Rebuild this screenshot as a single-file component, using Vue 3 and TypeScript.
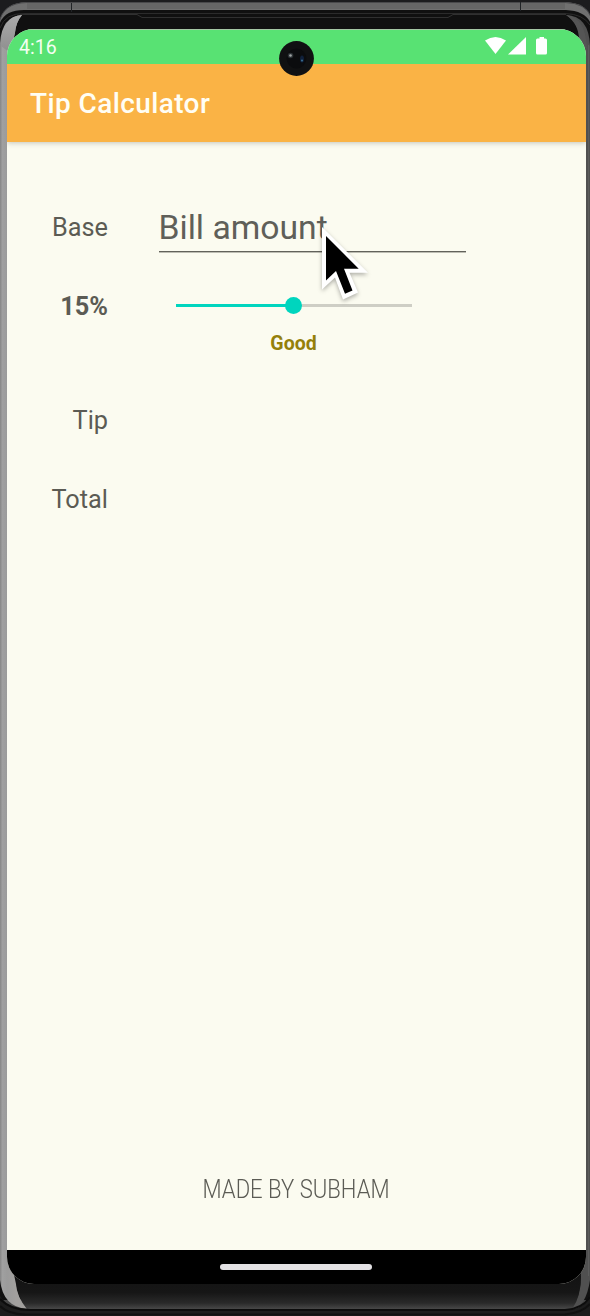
<script setup lang="ts">
import { computed, ref } from 'vue'

const bill = ref('')
const percent = ref(15)
const maxPercent = 30
const fill = computed(() => `${(percent.value / maxPercent) * 100}%`)
</script>

<template>
  <div class="device">
    <svg class="frame" viewBox="0 0 590 1316" aria-hidden="true">
      <defs>
        <linearGradient id="rim" x1="0" y1="0" x2="0" y2="1">
          <stop offset="0" stop-color="#707070" />
          <stop offset="0.55" stop-color="#606060" />
          <stop offset="1" stop-color="#454545" />
        </linearGradient>
        <linearGradient id="side" gradientUnits="userSpaceOnUse" x1="0" y1="0" x2="16" y2="0">
          <stop offset="0" stop-color="#858585" />
          <stop offset="0.15" stop-color="#a0a0a0" />
          <stop offset="0.45" stop-color="#9b9b9b" />
          <stop offset="1" stop-color="#a2a09e" />
        </linearGradient>
        <linearGradient id="chin" x1="0" y1="0" x2="0" y2="1">
          <stop offset="0" stop-color="#131313" />
          <stop offset="0.5" stop-color="#161616" />
          <stop offset="0.82" stop-color="#2a2a2a" />
          <stop offset="1" stop-color="#484848" />
        </linearGradient>
        <linearGradient id="topArc" x1="0" y1="0" x2="0" y2="1">
          <stop offset="0" stop-color="#ababab" />
          <stop offset="1" stop-color="#8e8e8e" />
        </linearGradient>
      </defs>
      <rect width="590" height="1316" fill="#1c1c1e" />
      <!-- outer metal rim -->
      <path d="M-1 24Q2 3 27 2H565Q587 3 591 18V1316H-1Z" fill="url(#rim)" />
      <path d="M-1 25Q4 10 24 10H566Q586 11 591 24V1300H-1Z" fill="#101010" />
      <path d="M-1 24Q2 3 27 2.500H565Q586 3 591 17" fill="none" stroke="#49494b" />
      <path d="M27 6H565" stroke="#666" stroke-width="6" />
      <path d="M71.500 3V12M520.500 2V11" stroke="#202326" />
      <path d="M0 28Q5 13 25 13.500H565Q583 14 590 25" fill="none" stroke="#2b2b2b" />
      <path d="M20 14.500H137L142 17.500H448L453 14.500H566" fill="none" stroke="#303030" />
      <!-- side rails -->
      <path d="M22 15Q2 16 0 43V1280Q3 1307 27 1309Q17 1297 16 1284L12 1265V50L15 32Q16 22 22 15Z" fill="url(#side)" />
      <path d="M22 15Q2 16 1 46L9 52L15 33Q16 22 22 15Z" fill="url(#topArc)" />
      <path d="M566 15Q589 16 590 46V1280Q586 1307 572 1309Q581 1295 581 1273V50Q581 23 566 15Z" fill="#505050" />
      <path d="M566 15Q586 17 587 50L579 40Q579 24 566 15Z" fill="#555" />
      <path d="M588.500 45V1276" stroke="#5c5c5c" />
      <!-- bottom bezel -->
      <path d="M16 1276H581Q581 1297 572 1309H27Q16 1296 16 1276Z" fill="url(#chin)" />
      <path d="M0 1296Q8 1309 27 1309.500H572Q584 1308 590 1296V1316H0Z" fill="#1c1c1c" />
      <path d="M0 1299Q10 1310 30 1310H565Q582 1309 590 1297" fill="none" stroke="#0c0c0c" stroke-width="2" />
      <path d="M0 1306Q8 1314 25 1314.500H565Q582 1313 590 1304" fill="none" stroke="#101010" stroke-width="2" />
    </svg>

    <main class="screen">
      <header class="status">
        <time>4:16</time>
        <svg class="signals" width="64" height="20" viewBox="0 0 64 20" aria-label="Connected">
          <path d="M0 4.500Q10.500 -2.500 21 4.500L10.500 18Z" />
          <path d="M41 1V18.500H23Z" />
          <path d="M54.500 1H59V2.500H60.500Q62 2.500 62 4V17Q62 18.500 60.500 18.500H52.500Q51 18.500 51 17V4Q51 2.500 52.500 2.500H54.500Z" />
        </svg>
      </header>
      <div class="appbar"><h1>Tip Calculator</h1></div>

      <section class="content">
        <div class="row base">
          <label for="bill">Base</label>
          <input id="bill" v-model="bill" placeholder="Bill amount" inputmode="decimal" />
        </div>
        <div class="row rate">
          <strong>{{ percent }}%</strong>
          <div class="slider" role="slider" :aria-valuenow="percent">
            <div class="progress" :style="{ width: fill }"><i class="thumb"></i></div>
          </div>
        </div>
        <div class="rating">Good</div>
        <div class="row tip"><span>Tip</span></div>
        <div class="row total"><span>Total</span></div>
        <footer><span>MADE BY SUBHAM</span></footer>
      </section>

      <nav><div class="handle"></div></nav>
    </main>

    <svg class="camera" viewBox="0 0 36 36" aria-hidden="true">
      <circle cx="18.500" cy="18.500" r="17.400" fill="#101112" />
      <circle cx="18.500" cy="18.500" r="10" fill="#0b0c0e" />
      <circle cx="12.500" cy="15.500" r="2.800" fill="#2b3033" />
      <circle cx="12.500" cy="15.500" r="1.300" fill="#a2a7a8" />
      <ellipse cx="24" cy="19" rx="2" ry="3.500" fill="#10203a" />
      <circle cx="24" cy="20.500" r="1" fill="#3b7193" />
    </svg>

    <svg class="cursor" viewBox="0 0 56 84" aria-hidden="true">
      <path class="edge" d="M5 2V64.500L18 52.500L26 74.500L41 67.500L32.500 47.700H51Z" />
      <path class="arrow" d="M9 11V55.500L19 46L28 68.700L35.500 65.500L27 43.700H41.700Z" />
    </svg>
  </div>
</template>

<style>
body {
  margin: 0;
  background: #1c1c1e;
}
</style>

<style scoped>
.device {
  position: relative;
  box-sizing: border-box;
  width: 590px;
  height: 1316px;
  padding: 29px 4px 32px 7px;
  overflow: hidden;
  font-family: Roboto, sans-serif;
  color: #5b5b54;
}
.frame {
  position: absolute;
  inset: 0;
  width: 590px;
  height: 1316px;
}
.screen {
  position: relative;
  display: flex;
  flex-direction: column;
  width: 579px;
  height: 1255px;
  border-radius: 27px;
  overflow: hidden;
  background: #fbfbf0;
}
.status {
  display: flex;
  position: relative;
  z-index: 2;
  justify-content: space-between;
  box-sizing: border-box;
  height: 35px;
  padding: 7px 37px 0 12px;
  background: #58e273;
  box-shadow: inset 0 1px #a4c6a4;
  color: #f4fff2;
}
time {
  font-size: 19.5px;
  line-height: 23px;
}
.signals {
  fill: #fff;
}
.appbar {
  display: flex;
  align-items: center;
  box-sizing: border-box;
  height: 78px;
  padding: 2px 0 0 23px;
  background: #fab345;
  box-shadow: 0 1px 5px rgba(60, 60, 50, 0.28);
  z-index: 1;
}
h1 {
  margin: 0;
  font-size: 28px;
  font-weight: 500;
  line-height: 32px;
  letter-spacing: 0.4px;
  color: #fffef4;
}
.content {
  display: flex;
  flex: 1;
  flex-direction: column;
}
.row {
  display: grid;
  grid-template-columns: 101px 307px;
  column-gap: 51px;
  align-items: center;
  font-size: 25.300px;
  line-height: 30px;
}
.row > :first-child {
  text-align: right;
}
.base {
  height: 50px;
  margin-top: 60px;
}
.base label {
  padding-top: 2px;
}
input {
  box-sizing: border-box;
  width: 307px;
  height: 50px;
  padding: 1px 0 0;
  border: 0;
  border-bottom: 1px solid #62625b;
  box-shadow: 0 1px #bdbdb3;
  outline: 0;
  background: transparent;
  font: 33.700px/40px Roboto, sans-serif;
  text-indent: -0.5px;
  color: inherit;
}
input::placeholder {
  color: #5f5f59;
  opacity: 1;
}
.rate {
  height: 30px;
  margin-top: 39px;
}
.rate strong {
  padding-top: 1px;
}
.slider {
  width: 236px;
  height: 3px;
  margin: -3px 0 0 17px;
  background: #ceceC5;
}
.progress {
  display: flex;
  align-items: center;
  justify-content: flex-end;
  height: 3px;
  background: #00d5be;
}
.thumb {
  flex: none;
  width: 17px;
  height: 17px;
  margin-right: -8px;
  border-radius: 50%;
  background: #00d5be;
}
.rating {
  width: 573px;
  height: 24px;
  margin-top: 11px;
  text-align: center;
  font-size: 19.500px;
  font-weight: 700;
  line-height: 24px;
  color: #94800a;
}
.tip {
  margin-top: 50px;
}
.total {
  margin-top: 49px;
}
footer {
  margin-top: auto;
  height: 76px;
  text-align: center;
  font-size: 26px;
  font-weight: 300;
  line-height: 30px;
}
footer span {
  display: inline-block;
  transform: scaleX(0.85);
  white-space: nowrap;
}
nav {
  display: flex;
  justify-content: center;
  box-sizing: border-box;
  height: 34px;
  padding: 14px 1px 0 0;
  background: #000;
}
.handle {
  width: 152px;
  height: 6px;
  border-radius: 3px;
  background: #e4e2e5;
}
.camera {
  position: absolute;
  left: 278px;
  top: 40px;
  z-index: 3;
  width: 36px;
  height: 36px;
}
.cursor {
  position: absolute;
  left: 317px;
  top: 225px;
  z-index: 3;
  width: 56px;
  height: 84px;
  overflow: visible;
  filter: drop-shadow(0 2px 2px rgba(0, 0, 0, 0.3));
}
.edge {
  fill: #fff;
}
.arrow {
  fill: #000;
}
</style>
